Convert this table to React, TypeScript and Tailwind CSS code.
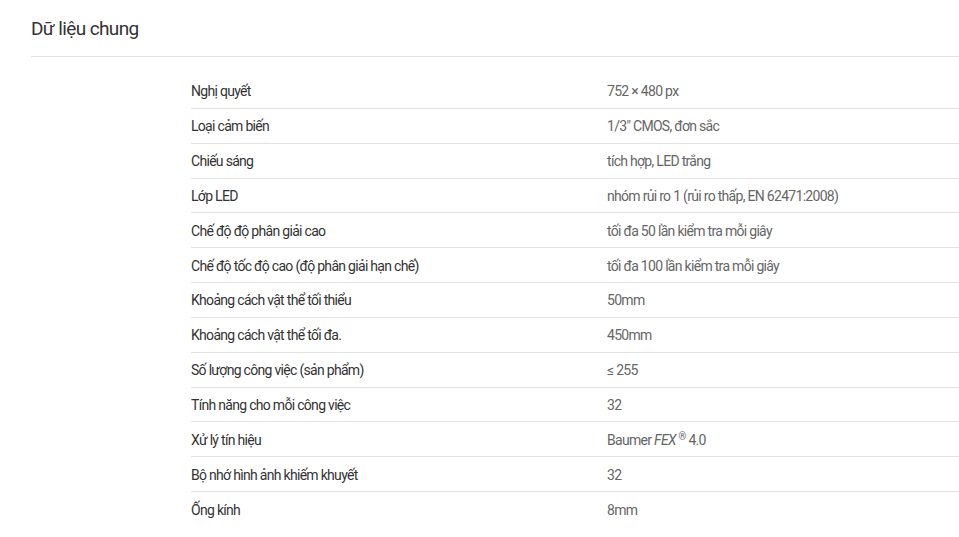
import React from "react";

const rows: [string, React.ReactNode][] = [
  ["Nghị quyết", "752 × 480 px"],
  ["Loại cảm biến", '1/3" CMOS, đơn sắc'],
  ["Chiếu sáng", "tích hợp, LED trắng"],
  ["Lớp LED", "nhóm rủi ro 1 (rủi ro thấp, EN 62471:2008)"],
  ["Chế độ độ phân giải cao", "tối đa 50 lần kiểm tra mỗi giây"],
  ["Chế độ tốc độ cao (độ phân giải hạn chế)", "tối đa 100 lần kiểm tra mỗi giây"],
  ["Khoảng cách vật thể tối thiểu", "50mm"],
  ["Khoảng cách vật thể tối đa.", "450mm"],
  ["Số lượng công việc (sản phẩm)", "≤ 255"],
  ["Tính năng cho mỗi công việc", "32"],
  [
    "Xử lý tín hiệu",
    <>
      Baumer <i>FEX</i> <sup className="text-[10px]">®</sup> 4.0
    </>,
  ],
  ["Bộ nhớ hình ảnh khiếm khuyết", "32"],
  ["Ống kính", "8mm"],
];

export default function App() {
  return (
    <div className="w-[959px] h-[537px] overflow-hidden bg-white pl-[31px] font-['Roboto',sans-serif]">
      <h2 className="pt-[16px] pb-[14px] text-[19px] leading-[26px] tracking-[-0.6px] text-[#333] border-b border-[#e2e2e2] w-[960px]">
        Dữ liệu chung
      </h2>
      <div className="ml-[160px] mt-[17px] w-[800px]">
        {rows.map(([label, value], i) => (
          <div
            key={i}
            className={
              "flex items-center h-[34.85px] pt-[2px] text-[14px] tracking-[-0.7px] " +
              (i < rows.length - 1 ? "border-b border-[#e2e2e2]" : "")
            }
          >
            <div className="w-[416px] text-[#333]">{label}</div>
            <div className="text-[#666]">{value}</div>
          </div>
        ))}
      </div>
    </div>
  );
}
